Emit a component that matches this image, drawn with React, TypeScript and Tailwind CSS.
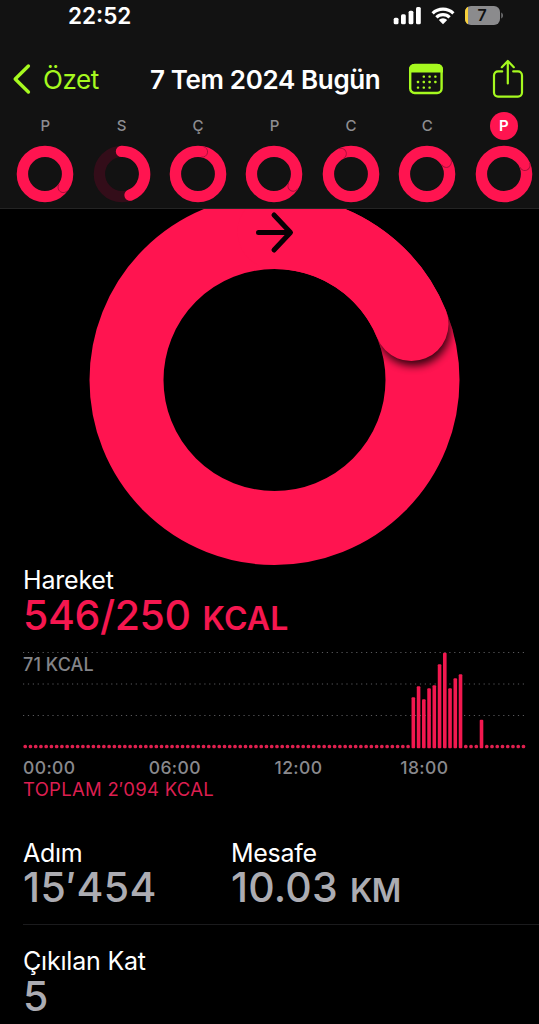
import React from "react";

const PINK = "#ff1450";
const LIME = "#a6f91f";

type Day = { label: string; angle: number; partial?: boolean; active?: boolean };

const days: Day[] = [
  { label: "P", angle: 126 },
  { label: "S", angle: 159, partial: true },
  { label: "Ç", angle: 11 },
  { label: "P", angle: 122 },
  { label: "C", angle: -26 },
  { label: "C", angle: 58 },
  { label: "P", angle: 67, active: true },
];

// quarter-hour slots that are not empty
const activity: Record<number, number> = {
  74: 51,
  75: 62,
  76: 49,
  77: 60,
  78: 63,
  79: 84,
  80: 95.5,
  81: 60,
  82: 70,
  83: 74,
  87: 28.5,
};

const point = (cx: number, cy: number, r: number, deg: number) => {
  const a = (deg * Math.PI) / 180;
  return { x: cx + r * Math.sin(a), y: cy - r * Math.cos(a) };
};

const MiniRing = ({ day }: { day: Day }) => {
  const r = 22.6;
  const end = point(29, 29, r, day.angle);

  if (day.partial) {
    return (
      <svg width="58" height="58" viewBox="0 0 58 58" fill="none">
        <circle cx="29" cy="29" r={r} stroke="#330d19" strokeWidth="11.4" />
        <path
          d={`M28.5 6.4 A${r} ${r} 0 0 1 ${end.x} ${end.y}`}
          stroke={PINK}
          strokeWidth="11.4"
          strokeLinecap="round"
        />
      </svg>
    );
  }

  return (
    <svg width="58" height="58" viewBox="0 0 58 58" fill="none">
      <circle cx="29" cy="29" r={r} stroke={PINK} strokeWidth="11.4" />
      <path
        d="M-5.3 0 A5.3 5.3 0 0 0 5.3 0"
        transform={`translate(${end.x} ${end.y}) rotate(${day.angle - 90})`}
        stroke="#a80f3a"
        strokeWidth="0.9"
      />
    </svg>
  );
};

const StatusBar = () => (
  <div className="flex h-[34px] items-start justify-between pl-[68px] pr-[36px]">
    <span className="text-[22.5px] leading-[32px] font-semibold">22:52</span>
    <svg width="110" height="34" viewBox="393 0 110 34" fill="none">
      <g fill="#fff">
        <rect x="393.7" y="17.7" width="4.8" height="6.6" rx="1.5" />
        <rect x="401" y="14.3" width="4.8" height="10" rx="1.5" />
        <rect x="408.6" y="10.7" width="4.8" height="13.6" rx="1.5" />
        <rect x="416" y="7" width="4.8" height="17.3" rx="1.5" />
        <path d="M443 24.2 L438.8 20 A6 6 0 0 1 447.2 20 Z" />
      </g>
      <g stroke="#fff" strokeWidth="3.2">
        <path d="M432.6 13.4 A15 15 0 0 1 453.4 13.4" />
        <path d="M436.4 17.4 A9.4 9.4 0 0 1 449.6 17.4" />
      </g>
      <rect x="465" y="6" width="35" height="19" rx="6" fill="#8b8b8d" />
      <path d="M468 6.8 A6 6 0 0 0 465 12 V19 A6 6 0 0 0 468 24.2 Z" fill="#f8d03a" />
      <path d="M501.2 12.6 C503.6 13.6 503.6 17.4 501.2 18.4 Z" fill="#6c6c6e" />
      <text x="482" y="21.4" textAnchor="middle" fill="#111" className="font-['Inter'] text-[16px] font-semibold">
        7
      </text>
    </svg>
  </div>
);

const NavBar = () => (
  <div className="flex h-[76px] items-center pl-3 pt-[14px]">
    <svg width="20" height="32" viewBox="0 0 20 32" fill="none">
      <path d="M16.4 3 L3.2 16 L16.4 29" stroke={LIME} strokeWidth="3.4" strokeLinecap="round" strokeLinejoin="round" />
    </svg>
    <span className="ml-[11px] w-[107px] pt-px text-[26px] leading-8 tracking-[-0.4px] text-[#a6f91f]">Özet</span>
    <h1 className="w-[258px] whitespace-nowrap pt-px text-[26px] leading-8 font-semibold tracking-[-0.36px]">
      7 Tem 2024 Bugün
    </h1>
    <svg width="36" height="34" viewBox="0 0 36 34" fill="none">
      <rect x="2.2" y="3" width="31.4" height="28" rx="4.5" stroke={LIME} strokeWidth="2.4" />
      <path d="M1 10.5 V7 A5 5 0 0 1 6 2 H30 A5 5 0 0 1 35 7 V10.5 Z" fill={LIME} />
      <g fill={LIME}>
        {[14.8, 20.6, 26.4].map((x) => (
          <rect key={`a${x}`} x={x - 0.2} y="13.4" width="2.4" height="2.4" rx="0.8" />
        ))}
        {[9, 14.8, 20.6, 26.4].map((x) => (
          <rect key={`b${x}`} x={x - 0.2} y="18.8" width="2.4" height="2.4" rx="0.8" />
        ))}
        {[9, 14.8, 20.6].map((x) => (
          <rect key={`c${x}`} x={x - 0.2} y="24.4" width="2.4" height="2.4" rx="0.8" />
        ))}
      </g>
    </svg>
    <svg className="ml-12" width="32" height="40" viewBox="0 0 32 40" fill="none">
      <g stroke={LIME} strokeWidth="2.2" strokeLinecap="round" strokeLinejoin="round">
        <path d="M10.2 12.4 H6 A4 4 0 0 0 2 16.4 V33.6 A4 4 0 0 0 6 37.6 H26 A4 4 0 0 0 30 33.6 V16.4 A4 4 0 0 0 26 12.4 H21.2" />
        <path d="M15.8 24.5 V2.4 M9.8 8.2 L15.8 2 L21.8 8.2" />
      </g>
    </svg>
  </div>
);

const WeekStrip = () => (
  <div className="ml-[7px] grid w-[535px] grid-cols-7">
    {days.map((day, index) => (
      <div key={index} className="flex flex-col items-center">
        <span
          className={
            day.active
              ? "mt-[2px] flex size-7 items-center justify-center rounded-full bg-[#ff1450] pt-px text-[15px] font-semibold text-white"
              : "mt-[2px] flex size-7 items-center justify-center pt-px text-[15px] font-medium text-[#8d8d91]"
          }
        >
          {day.label}
        </span>
        <div className="mt-[5px]">
          <MiniRing day={day} />
        </div>
      </div>
    ))}
  </div>
);

const MoveRing = () => {
  const cx = 274.5;
  const cy = 171;
  const tip = point(cx, cy, 148, 67.8);

  return (
    <svg className="block" width="539" height="357" viewBox="0 0 539 357" fill="none">
      <defs>
        <clipPath id="band">
          <path
            clipRule="evenodd"
            d="M89.5 171 a185 185 0 1 0 370 0 a185 185 0 1 0 -370 0 Z M163.5 171 a111 111 0 1 0 222 0 a111 111 0 1 0 -222 0 Z"
          />
        </clipPath>
        <filter id="soft" x="-30%" y="-30%" width="160%" height="160%">
          <feGaussianBlur stdDeviation="4" />
        </filter>
      </defs>
      <circle cx={cx} cy={cy} r="148" stroke={PINK} strokeWidth="74" />
      <g clipPath="url(#band)">
        <circle cx={tip.x + 2} cy={tip.y + 5} r="37" fill="#000" opacity="0.8" filter="url(#soft)" />
      </g>
      <path
        d={`M${cx} 23 A148 148 0 0 1 ${tip.x} ${tip.y}`}
        stroke={PINK}
        strokeWidth="74"
        strokeLinecap="round"
      />
      <path
        d="M258.5 23.5 H290 M274 6 L290.5 23.5 L274 41"
        stroke="#080003"
        strokeWidth="5"
        strokeLinecap="round"
        strokeLinejoin="round"
      />
    </svg>
  );
};

const MoveChart = () => (
  <svg className="mt-[14px] block" width="516" height="99" viewBox="0 0 516 99">
    {[2.5, 34, 65.5].map((y) => (
      <line key={y} x1="0" x2="504" y1={y} y2={y} stroke="#59595c" strokeWidth="1" strokeDasharray="1.2 3.7" />
    ))}
    <text x="0" y="20.6" fill="#848488" className="text-[18px] font-medium tracking-[0.1px]">
      71 KCAL
    </text>
    {Array.from({ length: 96 }, (_, i) => {
      const h = activity[i] ?? 3.6;
      return (
        <rect
          key={i}
          x={0.4 + i * 5.245}
          y={98.3 - h}
          width="3.6"
          height={h}
          rx={activity[i] ? 1 : 1.6}
          fill={activity[i] ? "#f2184f" : "#e0204f"}
        />
      );
    })}
  </svg>
);

const App = () => {
  return (
    <div className="h-[1024px] w-[539px] overflow-hidden bg-black font-['Inter','Liberation_Sans',sans-serif] text-white">
      <header className="h-[209px] border-b border-[#242424] bg-[#121212]">
        <StatusBar />
        <NavBar />
        <WeekStrip />
      </header>

      <MoveRing />

      <section className="pl-[23px]">
        <h2 className="text-[25px] leading-7 tracking-[-0.2px]">Hareket</h2>
        <p className="flex h-[42px] items-baseline gap-3 text-[41px] leading-[42px] font-medium tracking-[-0.4px] text-[#f5174f]">
          546/250
          <span className="text-[32px] leading-none font-semibold tracking-[0.1px]">KCAL</span>
        </p>
        <MoveChart />
        <div className="mt-[9px] grid w-[503px] grid-cols-4 text-[17.5px] leading-5 font-medium tracking-[0.4px] text-[#89898d]">
          <span>00:00</span>
          <span>06:00</span>
          <span>12:00</span>
          <span>18:00</span>
        </div>
        <p className="text-[18.5px] leading-[22px] tracking-[0.27px] text-[#dc1f50]">TOPLAM 2′094 KCAL</p>
      </section>

      <section className="mt-[39px] pl-[23px]">
        <div className="flex h-[86px] border-b border-[#1b1b1d]">
          <div className="w-[208px]">
            <h2 className="text-[25px] leading-7 tracking-[-0.3px]">Adım</h2>
            <p className="text-[41px] leading-10 font-medium tracking-[0.4px] text-[#acacb2]">15′454</p>
          </div>
          <div>
            <h2 className="text-[25px] leading-7 tracking-[-0.3px]">Mesafe</h2>
            <p className="flex h-10 items-baseline gap-3 text-[41px] leading-10 font-medium tracking-[0.2px] text-[#acacb2]">
              10.03
              <span className="text-[32px] leading-none font-semibold tracking-[-0.6px]">KM</span>
            </p>
          </div>
        </div>
        <div className="mt-[22px]">
          <h2 className="text-[25px] leading-7 tracking-[-0.2px]">Çıkılan Kat</h2>
          <p className="text-[41px] leading-[42px] font-medium text-[#acacb2]">5</p>
        </div>
      </section>
    </div>
  );
};

export default App;
